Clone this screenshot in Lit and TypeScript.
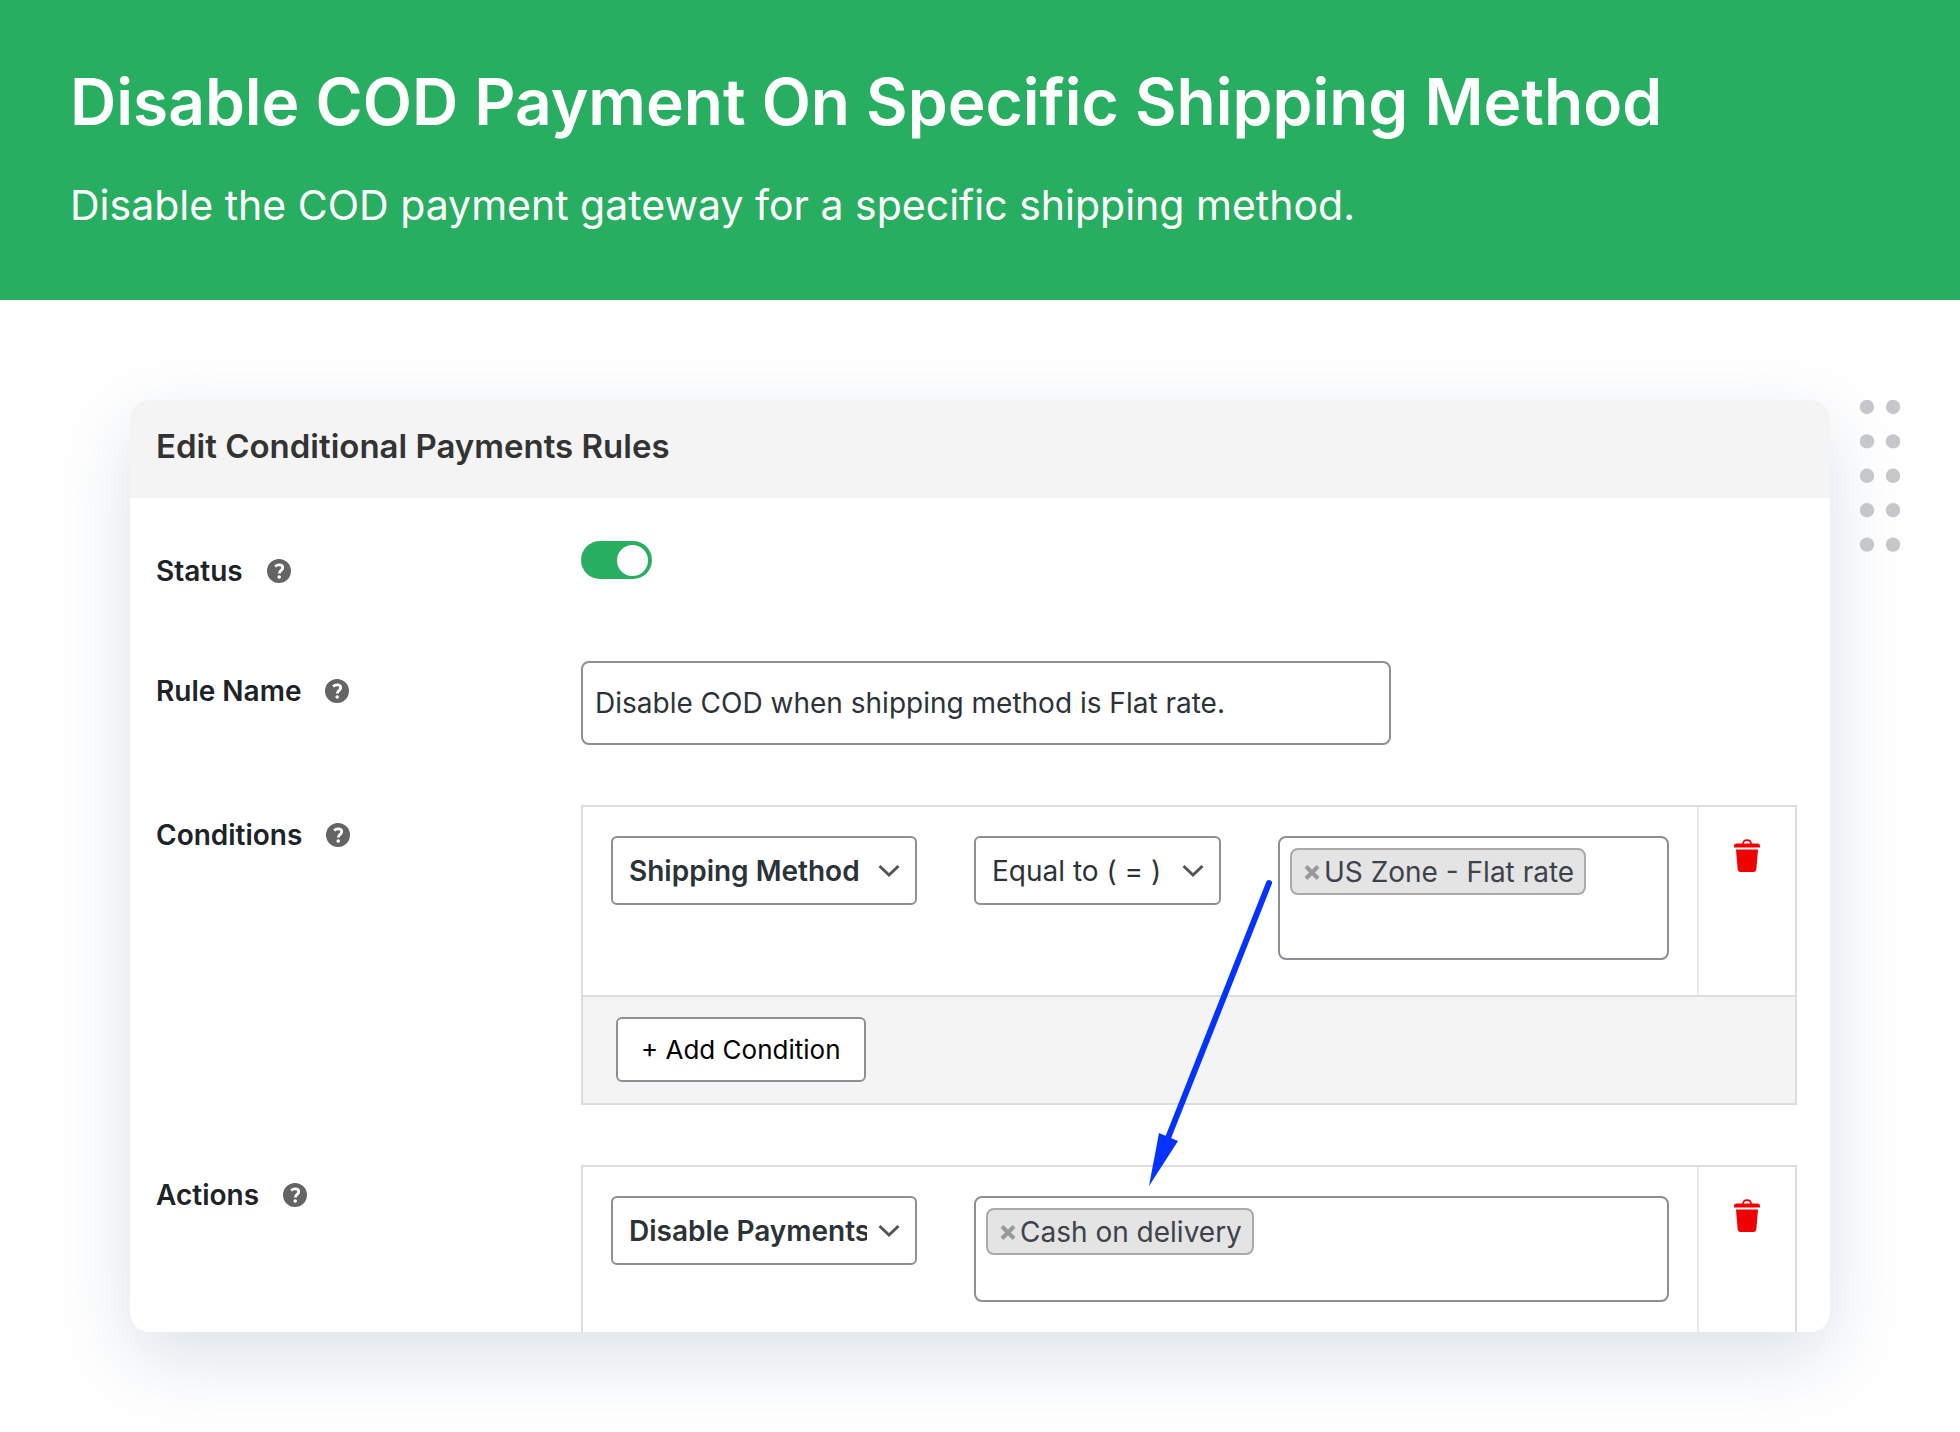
import { LitElement, html, css, svg } from "lit";
import { customElement, property, state } from "lit/decorators.js";

const chevron = svg`<path d="M1.5 2 L11 11 L20.5 2" fill="none" stroke="#555" stroke-width="3" />`;

/* Round question-mark badge shown next to each field label. */
@customElement("help-tip")
class HelpTip extends LitElement {
  @property() label = "";

  static styles = css`
    :host {
      display: inline-flex;
    }
    .tip {
      display: flex;
      padding: 0;
      border: 0;
      background: none;
      cursor: help;
    }
    .icon {
      width: 24px;
      height: 24px;
    }
  `;

  render() {
    return html`<button class="tip" type="button" aria-label=${this.label}>
      <svg class="icon" viewBox="0 0 24 24" aria-hidden="true">
        <circle cx="12" cy="12" r="12" fill="#646464" />
        <path
          d="M8.2 7.6 C9.2 6.4 10.5 5.9 12.1 5.9 C14.4 5.9 15.7 7 15.7 8.7 C15.7 11.4 12.3 11.4 12.3 14.6"
          fill="none"
          stroke="#fff"
          stroke-width="2.8"
        />
        <circle cx="12.2" cy="18" r="1.8" fill="#fff" />
      </svg>
    </button>`;
  }
}

/* Drop-down with a custom chevron. */
@customElement("rule-select")
class RuleSelect extends LitElement {
  @property() label = "";
  @property({ type: Array }) options: string[] = [];
  @property({ type: Boolean }) strong = false;

  static styles = css`
    :host {
      display: block;
    }
    .wrap {
      position: relative;
      display: flex;
      align-items: center;
    }
    .select {
      width: 100%;
      height: 69px;
      box-sizing: border-box;
      appearance: none;
      border: 2px solid #8c8f94;
      border-radius: 6px;
      background: #fff;
      color: #2c3338;
      font: 400 28px/40px Inter, "Liberation Sans", sans-serif;
      padding: 0 48px 0 16px;
    }
    .strong {
      font-weight: 600;
    }
    .chevron {
      position: absolute;
      right: 17px;
      width: 22px;
      height: 14px;
      pointer-events: none;
    }
  `;

  render() {
    return html`<div class="wrap">
      <select class="select ${this.strong ? "strong" : ""}" aria-label=${this.label}>
        ${this.options.map((o) => html`<option>${o}</option>`)}
      </select>
      <svg class="chevron" viewBox="0 0 22 14" aria-hidden="true">${chevron}</svg>
    </div>`;
  }
}

/* Multi-value box holding removable chips and a search field. */
@customElement("chip-box")
class ChipBox extends LitElement {
  @property() label = "";
  @property({ type: Array }) chips: string[] = [];

  static styles = css`
    :host {
      display: flex;
    }
    .box {
      flex: 1;
      min-width: 0;
      display: flex;
      align-items: flex-start;
      gap: 10px;
      box-sizing: border-box;
      padding: 10px;
      border: 2px solid #8c8f94;
      border-radius: 8px;
      background: #fff;
    }
    .chip {
      display: flex;
      align-items: center;
      gap: 4px;
      box-sizing: border-box;
      height: 47px;
      padding: 0 10px 0 12px;
      border: 2px solid #aaa;
      border-radius: 8px;
      background: #e4e4e4;
      color: #3c434a;
      font: 400 28px/40px Inter, "Liberation Sans", sans-serif;
      white-space: nowrap;
    }
    .remove {
      display: flex;
      padding: 0;
      border: 0;
      background: none;
      cursor: pointer;
    }
    .cross {
      width: 16px;
      height: 16px;
    }
    .search {
      flex: 1;
      min-width: 0;
      width: 0;
      height: 47px;
      padding: 0;
      border: 0;
      outline: 0;
      background: none;
      font: 400 28px/40px Inter, "Liberation Sans", sans-serif;
    }
  `;

  render() {
    return html`<div class="box">
      ${this.chips.map(
        (c) => html`<span class="chip"
          ><button class="remove" type="button" aria-label="Remove ${c}">
            <svg class="cross" viewBox="0 0 16 16" aria-hidden="true">
              <path d="M2 2.5 L14 14.5 M14 2.5 L2 14.5" stroke="#999" stroke-width="4" />
            </svg></button
          >${c}</span
        >`
      )}
      <input class="search" type="text" aria-label=${this.label} />
    </div>`;
  }
}

/* Red bin button that deletes a row. */
@customElement("trash-button")
class TrashButton extends LitElement {
  static styles = css`
    :host {
      display: flex;
    }
    .trash {
      display: flex;
      padding: 0;
      border: 0;
      background: none;
      cursor: pointer;
    }
    .icon {
      width: 26px;
      height: 33px;
    }
  `;

  render() {
    return html`<button class="trash" type="button" aria-label="Delete row">
      <svg class="icon" viewBox="0 0 26 33" aria-hidden="true">
        <path d="M9 5.4 C9 2.6 10.6 1.2 13 1.2 S17 2.6 17 5.4" fill="none" stroke="#f00000" stroke-width="1.8" />
        <path d="M0 8.6 V7 Q0 4.6 2.4 4.6 H23.6 Q26 4.6 26 7 V8.6 Z" fill="#f00000" />
        <path d="M2 10.6 H24 L22.3 30.6 Q22 33 19.8 33 H6.2 Q4 33 3.7 30.6 Z" fill="#f00000" />
      </svg>
    </button>`;
  }
}

@customElement("app-root")
class AppRoot extends LitElement {
  @state() private enabled = true;

  static styles = css`
    :host {
      display: flex;
      flex-direction: column;
      min-height: 100vh;
      background: #fff;
      font-family: Inter, "Liberation Sans", sans-serif;
      color: #1d2327;
    }
    .banner {
      display: flex;
      flex-direction: column;
      gap: 28px;
      box-sizing: border-box;
      padding: 62px 70px 60px;
      background: #28ae61;
      color: #fff;
    }
    .headline {
      margin: 0;
      font-size: 64px;
      line-height: 80px;
      font-weight: 600;
    }
    .tagline {
      margin: 0;
      font-size: 41px;
      line-height: 70px;
      font-weight: 400;
    }
    .stage {
      position: relative;
      padding: 100px 130px;
    }
    .dots {
      position: absolute;
      top: 100px;
      right: 60px;
      width: 40px;
      height: 152px;
    }
    .card {
      position: relative;
      border-radius: 20px;
      background: #fff;
      box-shadow: 0 26px 76px rgba(75, 110, 145, 0.2);
    }
    .card-head {
      padding: 26px 26px 32px;
      border-radius: 20px 20px 0 0;
      background: #f4f4f4;
    }
    .card-title {
      margin: 0;
      font-size: 33px;
      line-height: 40px;
      font-weight: 600;
      color: #333;
    }
    .form {
      display: flex;
      flex-direction: column;
      gap: 60px;
      padding: 43px 33px 0 26px;
    }
    .row {
      display: grid;
      grid-template-columns: 425px minmax(0, 1fr);
      align-items: start;
    }
    .label {
      display: flex;
      align-items: center;
      gap: 24px;
      font-size: 28px;
      line-height: 60px;
      font-weight: 600;
    }
    .switch {
      appearance: none;
      display: flex;
      align-items: center;
      justify-content: flex-start;
      box-sizing: border-box;
      width: 71px;
      height: 38px;
      margin: 0;
      padding: 0 4px;
      border-radius: 19px;
      background: #c3c4c7;
      cursor: pointer;
    }
    .switch:checked {
      background: #28ae61;
      justify-content: flex-end;
    }
    .switch::before {
      content: "";
      width: 31px;
      height: 31px;
      border-radius: 50%;
      background: #fff;
    }
    .name {
      width: 100%;
      max-width: 810px;
      height: 84px;
      box-sizing: border-box;
      padding: 0 12px;
      border: 2px solid #8c8f94;
      border-radius: 8px;
      background: #fff;
      color: #2c3338;
      font: 400 28px/40px Inter, "Liberation Sans", sans-serif;
    }
    .panel {
      border: 2px solid #ddd;
    }
    .panel.open {
      border-bottom: 0;
    }
    .entry {
      display: grid;
      grid-template-columns: minmax(0, 1fr) 96px;
    }
    .fields {
      display: grid;
      grid-template-columns: 306px 247px minmax(0, 1fr);
      gap: 57px;
      align-items: start;
      padding: 29px 28px 35px;
      border-right: 2px solid #e8e8e8;
    }
    .fields.pair {
      grid-template-columns: 306px minmax(0, 1fr);
      padding-bottom: 30px;
    }
    .tall {
      height: 124px;
    }
    .short {
      height: 106px;
    }
    .bin {
      display: flex;
      justify-content: center;
      align-items: flex-start;
      padding-top: 32px;
    }
    .foot {
      padding: 20px 33px 21px;
      border-top: 2px solid #ddd;
      background: #f4f4f4;
    }
    .add {
      height: 65px;
      padding: 0 23px;
      border: 2px solid #8c8f94;
      border-radius: 6px;
      background: #fff;
      color: #000;
      font: 400 26px/40px Inter, "Liberation Sans", sans-serif;
      cursor: pointer;
    }
    .arrow {
      position: absolute;
      left: 1016px;
      top: 476px;
      width: 130px;
      height: 312px;
      pointer-events: none;
    }
  `;

  render() {
    const dots = [0, 1, 2, 3, 4].flatMap((r) =>
      [7, 33].map((x) => svg`<circle cx=${x} cy=${7 + r * 34.4} r="7.2" fill="#c5c7cc" />`)
    );
    return html`
      <header class="banner">
        <h1 class="headline">Disable COD Payment On Specific Shipping Method</h1>
        <p class="tagline">Disable the COD payment gateway for a specific shipping method.</p>
      </header>
      <main class="stage">
        <section class="card">
          <header class="card-head">
            <h2 class="card-title">Edit Conditional Payments Rules</h2>
          </header>
          <form class="form">
            <div class="row">
              <div class="label">
                <label for="status">Status</label>
                <help-tip label="Help for Status"></help-tip>
              </div>
              <input
                class="switch"
                id="status"
                type="checkbox"
                role="switch"
                .checked=${this.enabled}
                @change=${() => (this.enabled = !this.enabled)}
              />
            </div>
            <div class="row">
              <div class="label">
                <label for="name">Rule Name</label>
                <help-tip label="Help for Rule Name"></help-tip>
              </div>
              <input class="name" id="name" type="text" value="Disable COD when shipping method is Flat rate." />
            </div>
            <div class="row">
              <div class="label">
                <span>Conditions</span>
                <help-tip label="Help for Conditions"></help-tip>
              </div>
              <div class="panel">
                <div class="entry">
                  <div class="fields">
                    <rule-select strong label="Condition" .options=${["Shipping Method"]}></rule-select>
                    <rule-select label="Operator" .options=${["Equal to ( = )"]}></rule-select>
                    <chip-box class="tall" label="Shipping methods" .chips=${["US Zone - Flat rate"]}></chip-box>
                  </div>
                  <div class="bin"><trash-button></trash-button></div>
                </div>
                <div class="foot"><button class="add" type="button">+ Add Condition</button></div>
              </div>
            </div>
            <div class="row">
              <div class="label">
                <span>Actions</span>
                <help-tip label="Help for Actions"></help-tip>
              </div>
              <div class="panel open">
                <div class="entry">
                  <div class="fields pair">
                    <rule-select strong label="Action" .options=${["Disable Payments"]}></rule-select>
                    <chip-box class="short" label="Payment methods" .chips=${["Cash on delivery"]}></chip-box>
                  </div>
                  <div class="bin"><trash-button></trash-button></div>
                </div>
              </div>
            </div>
          </form>
          <svg class="arrow" viewBox="0 0 130 312" aria-hidden="true">
            <path d="M123 7 L22 262" stroke="#0433ff" stroke-width="6" stroke-linecap="round" />
            <path d="M13 257 L32 265 L3 310 Z" fill="#0433ff" />
          </svg>
        </section>
        <svg class="dots" viewBox="0 0 40 152" aria-hidden="true">${dots}</svg>
      </main>
    `;
  }
}
